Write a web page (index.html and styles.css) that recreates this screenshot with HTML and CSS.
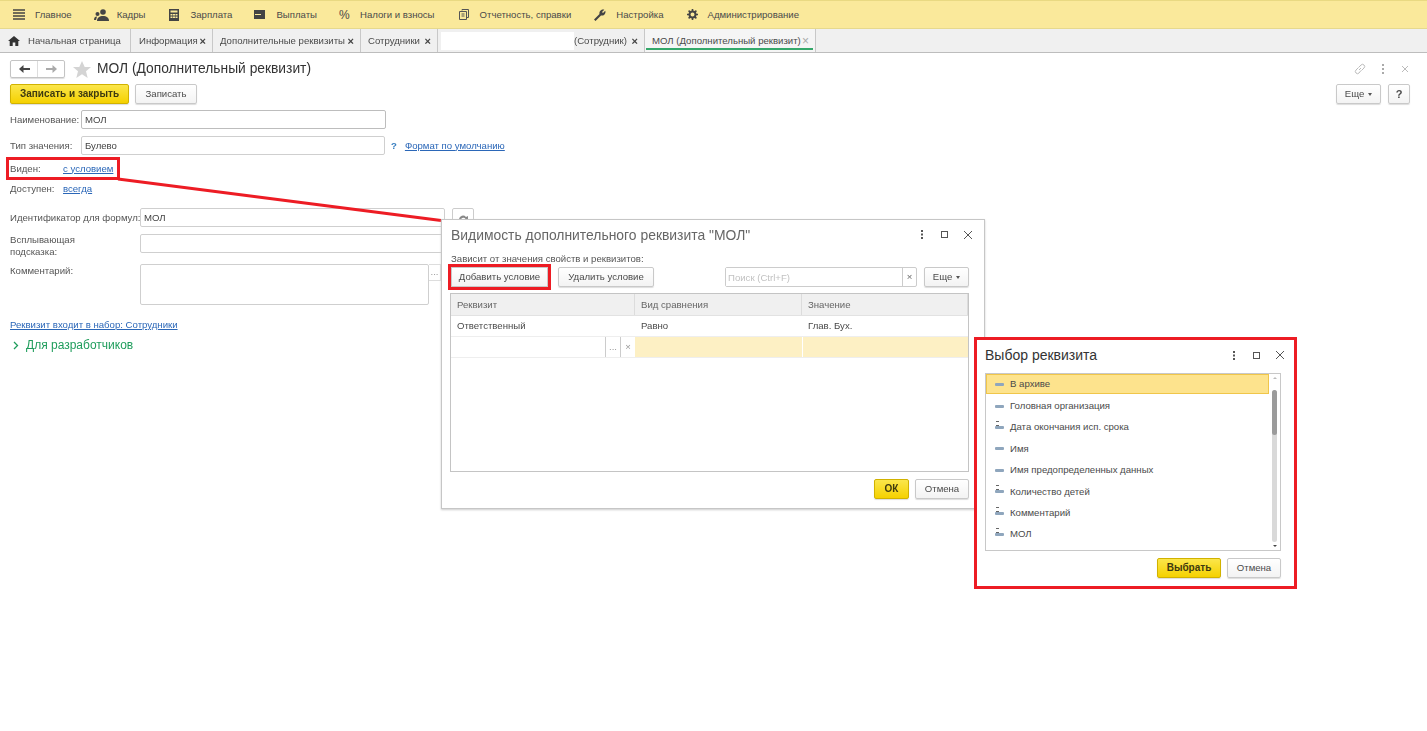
FILE: index.html
```html
<!DOCTYPE html>
<html lang="ru">
<head>
<meta charset="utf-8">
<title>МОЛ (Дополнительный реквизит)</title>
<link rel="stylesheet" href="styles.css">
</head>
<body>
<div class="page">
  <nav class="menubar">
    <a class="menu-item mi-main"><svg class="ico" width="13" height="12" viewBox="0 0 13 12"><path d="M0 1h12M0 4h12M0 7h12M0 10h12" stroke="#444" stroke-width="1.5"/></svg><span>Главное</span></a>
    <a class="menu-item mi-staff"><svg class="ico" width="15" height="12" viewBox="0 0 15 12"><circle cx="9" cy="3" r="2.8" fill="#444"/><path d="M3 12c0-3.500 2.500-5 6-5s6 1.500 6 5z" fill="#444"/><circle cx="3.500" cy="5" r="2" fill="#444"/><path d="M0 11c0-2.500 1-3.500 3-3.500L2 11z" fill="#444"/></svg><span>Кадры</span></a>
    <a class="menu-item mi-pay"><svg class="ico" width="10" height="12" viewBox="0 0 10 12"><path fill-rule="evenodd" d="M0 0h10v12H0zM1.500 1.500v2h7v-2zM1.500 5v1.500h2V5zM4 5v1.500h2V5zM6.500 5v1.500h2V5zM1.500 7.500V9h2V7.500zM4 7.500V9h2V7.500zM6.500 7.500V9h2V7.500z" fill="#444"/></svg><span>Зарплата</span></a>
    <a class="menu-item mi-out"><svg class="ico" width="11" height="9" viewBox="0 0 11 9"><path fill-rule="evenodd" d="M0 0h11v9H0zM1 4v1h6V4z" fill="#444"/></svg><span>Выплаты</span></a>
    <a class="menu-item mi-tax"><span class="percent">%</span><span>Налоги и взносы</span></a>
    <a class="menu-item mi-rep"><svg class="ico" width="10" height="11" viewBox="0 0 10 11"><path d="M3 1.500V.5h6.500v8H8M1 2.500h6.500v8H.5v-8zM2.500 5h3M2.500 7h3" fill="none" stroke="#555"/></svg><span>Отчетность, справки</span></a>
    <a class="menu-item mi-set"><svg class="ico" width="12" height="12" viewBox="0 0 12 12"><path d="M0 10.500 5.500 5C5 3 6.500.5 9 .5c.7 0 1 .2 1.300.3L8 3l1 1 2.200-2.200c.2.400.4.800.3 1.400C11.300 5.500 9.200 7 7 6.500L1.500 12z" fill="#444"/></svg><span>Настройка</span></a>
    <a class="menu-item mi-adm"><svg class="ico" width="11" height="11" viewBox="0 0 11 11"><circle cx="5.500" cy="5.500" r="3" fill="none" stroke="#444" stroke-width="2"/><path d="M5.500 0v2M5.500 9v2M0 5.500h2M9 5.500h2M1.600 1.600 3 3M8 8l1.400 1.400M1.600 9.400 3 8M8 3l1.400-1.400" stroke="#444" stroke-width="1.600"/></svg><span>Администрирование</span></a>
  </nav>

  <div class="tabbar">
    <div class="tab tab-home"><svg class="ico" width="12" height="10" viewBox="0 0 12 10"><path d="M6 0 0 5h1.700v5h3V6.500h2.600V10h3V5H12z" fill="#333"/></svg><span>Начальная страница</span></div>
    <div class="tab tab-info"><span>Информация</span><span class="x">×</span></div>
    <div class="tab tab-add"><span>Дополнительные реквизиты</span><span class="x">×</span></div>
    <div class="tab tab-emp"><span>Сотрудники</span><span class="x">×</span></div>
    <div class="tab tab-hidden"><span class="redact"></span><span>(Сотрудник)</span><span class="x">×</span></div>
    <div class="tab tab-active"><span>МОЛ (Дополнительный реквизит)</span><span class="x x-light">×</span></div>
  </div>

  <main class="form-window">
    <div class="titlebar">
      <div class="nav-pair">
        <span class="nav-btn"><svg width="11" height="8" viewBox="0 0 11 8"><path d="M4.500 0v3H11v2H4.500v3L0 4z" fill="#444"/></svg></span>
        <span class="nav-btn"><svg width="11" height="8" viewBox="0 0 11 8"><path d="M6.500 0v3H0v2h6.500v3L11 4z" fill="#aaa"/></svg></span>
      </div>
      <svg class="star" width="18" height="17" viewBox="0 0 18 17"><path d="m9 0 2.700 6H18l-5 4.200L14.700 17 9 13.300 3.300 17 5 10.200 0 6h6.300z" fill="#d4d4d4"/></svg>
      <h1 class="form-title">МОЛ (Дополнительный реквизит)</h1>
      <div class="window-tools">
        <svg width="12" height="12" viewBox="0 0 12 12"><path d="M5 7l2-2M4.500 4.500 2 7a2 2 0 0 0 3 3l2-2.500M7.500 7.500 10 5a2 2 0 0 0-3-3L4.800 4.300" fill="none" stroke="#bbb"/></svg>
        <svg width="3" height="10" viewBox="0 0 3 10"><path d="M0 0h2v2H0zM0 4h2v2H0zM0 8h2v2H0z" fill="#aaa"/></svg>
        <svg width="8" height="8" viewBox="0 0 8 8"><path d="m1 1 6 6M7 1 1 7" stroke="#bbb"/></svg>
      </div>
    </div>
    <div class="cmdbar">
      <button class="btn btn-primary btn-save-close">Записать и закрыть</button>
      <button class="btn btn-save">Записать</button>
      <div class="cmd-right">
        <button class="btn btn-more">Еще <i class="caret"></i></button>
        <button class="btn btn-help">?</button>
      </div>
    </div>

    <div class="row row-name">
      <label class="lbl lbl-name">Наименование:</label>
      <input class="field field-name" value="МОЛ">
    </div>
    <div class="row row-type">
      <label class="lbl lbl-name">Тип значения:</label>
      <input class="field field-type" value="Булево">
      <span class="hint-q">?</span>
      <a class="link">Формат по умолчанию</a>
    </div>
    <div class="row row-visible marked">
      <label class="lbl lbl-vis">Виден:</label>
      <a class="link">с условием</a>
    </div>
    <div class="row row-access">
      <label class="lbl lbl-vis">Доступен:</label>
      <a class="link">всегда</a>
    </div>
    <div class="row row-ident">
      <label class="lbl lbl-long">Идентификатор для формул:</label>
      <input class="field field-wide" value="МОЛ">
      <span class="ident-btn"><svg width="12" height="10" viewBox="0 0 12 10"><path d="M2 6a4 4 0 0 1 7-2l2-1v5H7l1.500-2A2.500 2.500 0 0 0 4 6.500V9z" fill="#888"/></svg></span>
    </div>
    <div class="row row-hint">
      <label class="lbl lbl-wrap">Всплывающая подсказка:</label>
      <input class="field field-wide">
    </div>
    <div class="row row-comment">
      <label class="lbl lbl-long">Комментарий:</label>
      <div class="field field-area"></div>
      <span class="area-btn">...</span>
    </div>
    <a class="link set-link">Реквизит входит в набор: Сотрудники</a>
    <div class="dev-group"><svg width="6" height="9" viewBox="0 0 6 9"><path d="m1 1 3.500 3.500L1 8" fill="none" stroke="#1f9d5c" stroke-width="1.300"/></svg><span>Для разработчиков</span></div>
  </main>

  <svg class="callout-line" width="460" height="60" viewBox="0 0 460 60"><path d="M118 5 445 47" stroke="#ed1c24" stroke-width="3"/></svg>

  <section class="dialog dialog-visibility">
    <header class="dlg-head">
      <h2 class="dlg-title">Видимость дополнительного реквизита "МОЛ"</h2>
      <div class="dlg-tools">
        <svg width="3" height="9" viewBox="0 0 3 9"><path d="M0 0h2v2H0zM0 3.500h2v2H0zM0 7h2v2H0z" fill="#555"/></svg>
        <svg width="9" height="9" viewBox="0 0 9 9"><rect x="1.500" y="1.500" width="6" height="6" fill="none" stroke="#555"/></svg>
        <svg width="10" height="10" viewBox="0 0 10 10"><path d="m1 1 8 8M9 1 1 9" stroke="#555"/></svg>
      </div>
    </header>
    <p class="dlg-sub">Зависит от значения свойств и реквизитов:</p>
    <div class="dlg-bar">
      <button class="btn btn-add marked">Добавить условие</button>
      <button class="btn btn-del">Удалить условие</button>
      <div class="search"><input class="search-input" placeholder="Поиск (Ctrl+F)"><span class="search-x">×</span></div>
      <button class="btn btn-more">Еще <i class="caret"></i></button>
    </div>
    <div class="grid-table">
      <div class="grid-row grid-head"><div>Реквизит</div><div>Вид сравнения</div><div>Значение</div></div>
      <div class="grid-row grid-body"><div>Ответственный</div><div>Равно</div><div>Глав. Бух.</div></div>
      <div class="grid-row grid-edit">
        <div class="edit-cell"><span class="edit-btn">...</span><span class="edit-btn">×</span></div><div></div><div></div>
      </div>
    </div>
    <footer class="dlg-foot">
      <button class="btn btn-primary btn-ok">ОК</button>
      <button class="btn btn-cancel">Отмена</button>
    </footer>
  </section>

  <section class="dialog dialog-pick">
    <header class="pick-head">
      <h2 class="pick-title">Выбор реквизита</h2>
      <div class="dlg-tools">
        <svg width="3" height="9" viewBox="0 0 3 9"><path d="M0 0h2v2H0zM0 3.500h2v2H0zM0 7h2v2H0z" fill="#555"/></svg>
        <svg width="9" height="9" viewBox="0 0 9 9"><rect x="1.500" y="1.500" width="6" height="6" fill="none" stroke="#555"/></svg>
        <svg width="10" height="10" viewBox="0 0 10 10"><path d="m1 1 8 8M9 1 1 9" stroke="#555"/></svg>
      </div>
    </header>
    <div class="pick-list">
      <ul class="pick-items">
        <li class="selected"><i class="attr"></i>В архиве</li>
        <li><i class="attr"></i>Головная организация</li>
        <li><i class="attr attr-add"></i>Дата окончания исп. срока</li>
        <li><i class="attr"></i>Имя</li>
        <li><i class="attr"></i>Имя предопределенных данных</li>
        <li><i class="attr attr-add"></i>Количество детей</li>
        <li><i class="attr attr-add"></i>Комментарий</li>
        <li><i class="attr attr-add"></i>МОЛ</li>
      </ul>
      <div class="scrollbar"><i class="arrow-up"></i><div class="track"><div class="thumb"></div></div><i class="arrow-down"></i></div>
    </div>
    <footer class="dlg-foot pick-foot">
      <button class="btn btn-primary btn-pick">Выбрать</button>
      <button class="btn btn-cancel">Отмена</button>
    </footer>
  </section>
</div>
</body>
</html>
```

FILE: styles.css
```css
* { box-sizing: border-box; }
html, body { margin: 0; padding: 0; background: #fff; }
body { font: 9.6px/12px "Liberation Sans", Arial, sans-serif; color: #4a4a4a; overflow: hidden; }
h1, h2, p, ul { margin: 0; padding: 0; font-weight: normal; }
ul { list-style: none; }
i { display: block; }

.page { position: relative; width: 1427px; height: 731px; overflow: hidden; filter: blur(.35px); }

/* top menu */
.menubar { display: flex; align-items: center; height: 29px; padding-left: 13px; background: #fae99b; border-top: 1px solid #e9d982; border-bottom: 1px solid #e6d98e; }
.menu-item { display: flex; align-items: center; gap: 9px; white-space: nowrap; }
.ico { flex: none; }
.percent { width: 11px; font-size: 12px; }
.mi-staff { margin-left: 22px; gap: 8px; }
.mi-pay { margin-left: 24px; gap: 11px; }
.mi-out { margin-left: 22px; gap: 11px; }
.mi-tax { margin-left: 22px; gap: 10px; }
.mi-rep { margin-left: 24px; gap: 11px; }
.mi-set { margin-left: 23px; gap: 10px; }
.mi-adm { margin-left: 23px; gap: 10px; }

/* tabs */
.tabbar { display: flex; height: 24px; background: #f0f0f0; border-bottom: 1px solid #bdbdbd; }
.tab { display: flex; align-items: center; padding: 0 6px 0 8px; border-right: 1px solid #c8c8c8; white-space: nowrap; }
.tab .x { margin-left: auto; }
.tab-home { width: 131px; gap: 8px; }
.tab-info { width: 82px; }
.tab-add { width: 148px; padding-left: 7px; }
.tab-emp { width: 77px; padding-left: 7px; }
.tab-hidden { width: 207px; padding-left: 3px; }
.redact { width: 133px; height: 18px; background: #fff; }
.tab-active { width: 171px; position: relative; padding-left: 7px; background: #f5f5f5; }
.tab-active::after { content: ""; position: absolute; left: 1px; right: 2px; bottom: 2px; height: 2px; background: #34a86a; }
.x { font-size: 11px; font-weight: bold; color: #444; }
.x-light { color: #aaa; font-weight: normal; font-size: 12px; }

/* main form */
.form-window { display: flex; flex-direction: column; align-items: flex-start; padding: 0 17px 0 10px; }
.titlebar { display: flex; align-items: center; width: 100%; height: 18px; margin-top: 7px; }
.nav-pair { display: flex; width: 55px; height: 18px; border: 1px solid #c4c4c4; border-radius: 2px; box-shadow: 0 1px 1px #ddd; }
.nav-btn { display: flex; flex: 1; align-items: center; justify-content: center; }
.nav-btn + .nav-btn { border-left: 1px solid #ddd; }
.star { margin-left: 8px; }
.form-title { margin-left: 6px; font-size: 13.8px; line-height: 16px; color: #333; }
.window-tools { display: flex; align-items: center; gap: 16px; margin-left: auto; margin-right: 1px; }

.cmdbar { display: flex; align-items: center; width: 100%; height: 20px; margin-top: 6px; gap: 6px; }
.cmd-right { display: flex; gap: 7px; margin-left: auto; }

.btn { display: flex; align-items: center; justify-content: center; gap: 4px; height: 20px; padding: 0; font: inherit; color: #4a4a4a; background: linear-gradient(#fff, #f3f3f3); border: 1px solid #c9c9c9; border-radius: 2px; box-shadow: 0 1px 1px #ddd; white-space: nowrap; }
.btn-primary { font-size: 10px; font-weight: bold; color: #3e3a10; background: linear-gradient(#fbe64b, #f5d100); border-color: #d1b200; }
.btn-save-close { width: 119px; }
.btn-save { width: 62px; }
.btn-more { width: 45px; }
.btn-help { width: 22px; font-weight: bold; font-size: 11px; }
.caret { width: 0; height: 0; margin-top: 1px; border: 2px solid transparent; border-top: 3px solid #555; border-bottom: 0; }

.row { display: flex; align-items: center; }
.lbl { color: #555; white-space: nowrap; }
.lbl-name { width: 71px; }
.lbl-vis { width: 53px; }
.lbl-long { width: 130px; }
.lbl-wrap { width: 130px; padding-right: 50px; white-space: normal; }
.field { height: 19px; padding: 0 3px; font: inherit; color: #444; background: #fff; border: 1px solid #cfcfcf; border-radius: 2px; outline: 0; }
.row-name { margin-top: 6px; }
.field-name { width: 305px; border-color: #bdbdbd; }
.row-type { margin-top: 7px; }
.field-type { width: 304px; }
.hint-q { margin-left: 6px; font-weight: bold; color: #3a7fc0; }
.hint-q + .link { margin-left: 8px; }
.link { color: #2b67b8; text-decoration: underline; }
.row-visible { width: 106px; height: 15px; margin-top: 6px; }
.marked { outline: 3px solid #ed1c24; }
.row-visible.marked { outline-offset: 1px; }
.row-access { height: 16px; margin-top: 5px; }
.row-ident { margin-top: 11px; }
.field-wide { width: 305px; }
.ident-btn { display: flex; align-items: center; justify-content: center; width: 22px; height: 19px; margin-left: 7px; border: 1px solid #ccc; border-radius: 2px; }
.row-hint { margin-top: 7px; align-items: flex-start; }
.row-comment { margin-top: 6px; align-items: flex-start; }
.row-comment .lbl { padding-top: 1px; }
.field-area { width: 289px; height: 41px; }
.area-btn { width: 12px; height: 17px; line-height: 14px; text-align: center; color: #999; border: 1px solid #ddd; border-left: 0; }
.set-link { margin-top: 14px; }
.dev-group { display: flex; align-items: center; gap: 7px; margin: 7px 0 0 3px; font-size: 12px; line-height: 15px; color: #1f9d5c; }

.callout-line { position: absolute; left: 0; top: 174px; }

/* dialogs */
.dialog { position: absolute; display: flex; flex-direction: column; background: #fff; }
.dialog-visibility { left: 441px; top: 219px; width: 544px; height: 290px; padding: 0 15px 0 8px; border: 1px solid #c6c6c6; box-shadow: 0 1px 2px #ccc; }
.dlg-head { display: flex; align-items: center; justify-content: space-between; height: 29px; margin: 0 0 1px 1px; }
.dlg-title { font-size: 13.9px; line-height: 18px; color: #666; }
.dlg-tools { display: flex; align-items: center; gap: 14px; }
.dlg-tools svg:first-child { margin-right: 2px; }
.dialog-visibility .dlg-tools { margin-right: -4px; }
.dlg-sub { margin: 3px 0 0 1px; color: #555; }
.dlg-bar { display: flex; align-items: center; height: 20px; margin-top: 2px; gap: 7px; }
.btn-add { width: 97px; margin-left: 1px; border-radius: 0; }
.btn-del { width: 96px; margin-left: 3px; }
.search { display: flex; width: 192px; height: 20px; margin-left: 64px; border: 1px solid #ccc; border-radius: 2px; }
.search-input { width: 177px; min-width: 0; height: 18px; padding: 0 2px; font: inherit; border: 0; border-right: 1px solid #ccc; outline: 0; }
.search-input::placeholder { color: #c2c2c2; }
.search-x { flex: 1; text-align: center; line-height: 17px; color: #666; }

.grid-table { height: 179px; margin-top: 6px; border: 1px solid #c4c4c4; }
.grid-row { display: grid; grid-template-columns: 184px 167px 1fr; align-items: center; }
.grid-row > div { padding-left: 6px; }
.grid-head { height: 22px; background: #f0f0f0; color: #666; border-bottom: 1px solid #e2e2e2; }
.grid-head > div { height: 100%; line-height: 21px; border-right: 1px solid #dcdcdc; }
.grid-body { height: 21px; border-bottom: 1px solid #eee; }
.grid-edit { height: 21px; background: #fdf0c4; border-bottom: 1px solid #eee; }
.grid-edit > div { height: 100%; }
.grid-edit > div + div + div { border-left: 1px solid #fff; }
.grid-row > .edit-cell { display: flex; justify-content: flex-end; padding: 0; background: #fff; }
.edit-btn { width: 15px; line-height: 19px; text-align: center; color: #999; border-left: 1px solid #ccc; }

.dlg-foot { display: flex; justify-content: flex-end; gap: 6px; margin-top: 7px; }
.btn-ok { width: 35px; }
.btn-cancel { width: 54px; }

.dialog-pick { left: 974px; top: 337px; width: 323px; height: 252px; padding: 0 13px 0 8px; border: 3px solid #ed1c24; }
.pick-head { display: flex; align-items: center; justify-content: space-between; height: 28px; margin-top: 1px; }
.pick-title { font-size: 14px; line-height: 16px; color: #333; }
.pick-head .dlg-tools { margin-right: -4px; }
.pick-list { display: flex; height: 178px; margin-top: 4px; border: 1px solid #c8c8c8; }
.pick-items { flex: 1; }
.pick-items li { display: flex; align-items: center; gap: 6px; height: 21.4px; padding-left: 9px; }
.pick-items li.selected { height: 20px; margin-bottom: 1.400px; padding-left: 8px; background: #fde38d; border: 1px solid #f0c64a; }
.attr { position: relative; width: 9px; height: 3px; background: #8fa6bd; border-radius: 1px; }
.attr-add::before { content: ""; position: absolute; left: 1px; top: -5px; width: 3px; height: 3px; border-top: 1px solid #666; border-bottom: 1px solid #666; }
.scrollbar { display: flex; flex-direction: column; align-items: center; width: 11px; }
.arrow-up, .arrow-down { width: 0; height: 0; margin: 3px 0; border: 2px solid transparent; }
.arrow-up { border-bottom: 2px solid #bbb; border-top: 0; }
.arrow-down { border-top: 2px solid #444; border-bottom: 0; }
.track { flex: 1; width: 5px; margin-top: 8px; background: #d9d9d9; border-radius: 3px; }
.thumb { height: 45px; background: #9b9b9b; border-radius: 3px; }
.pick-foot { margin-top: 7px; }
.btn-pick { width: 64px; }
```
